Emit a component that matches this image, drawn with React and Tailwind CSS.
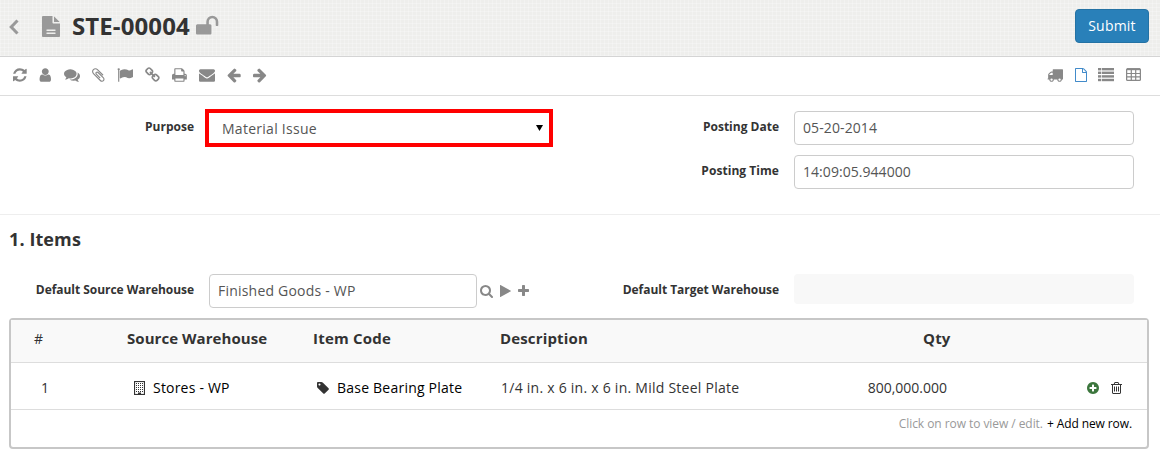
const PATHS = {
  file: [1536, "M1596 476q14 14 28 36h-472v-472q22 14 36 28zm-476 164h544v1056q0 40-28 68t-68 28h-1344q-40 0-68-28t-28-68v-1600q0-40 28-68t68-28h800v544q0 40 28 68t68 28zm160 864v-64q0-14-9-23t-23-9h-704q-14 0-23 9t-9 23v64q0 14 9 23t23 9h704q14 0 23-9t9-23zm0-256v-64q0-14-9-23t-23-9h-704q-14 0-23 9t-9 23v64q0 14 9 23t23 9h704q14 0 23-9t9-23z"],
  unlock: [1664, "M1728 576v256q0 26-19 45t-45 19h-64q-26 0-45-19t-19-45v-256q0-106-75-181t-181-75-181 75-75 181v192h96q40 0 68 28t28 68v576q0 40-28 68t-68 28h-960q-40 0-68-28t-28-68v-576q0-40 28-68t68-28h672v-192q0-185 131.500-316.500t316.500-131.500 316.500 131.500 131.500 316.500z"],
  refresh: [1536, "M1639 1056q0 5-1 7-64 268-268 434.500t-478 166.500q-146 0-282.500-55t-243.500-157l-129 129q-19 19-45 19t-45-19-19-45v-448q0-26 19-45t45-19h448q26 0 45 19t19 45-19 45l-137 137q71 66 161 102t187 36q134 0 250-65t186-179q11-17 53-117 8-23 30-23h192q13 0 22.500 9.500t9.500 22.500zm25-800v448q0 26-19 45t-45 19h-448q-26 0-45-19t-19-45 19-45l138-138q-148-137-349-137-134 0-250 65t-186 179q-11 17-53 117-8 23-30 23h-199q-13 0-22.500-9.500t-9.500-22.500v-7q65-268 270-434.500t480-166.500q146 0 284 55.500t245 156.500l130-129q19-19 45-19t45 19 19 45z"],
  user: [1408, "M1536 1399q0 109-62.500 187t-150.500 78h-854q-88 0-150.500-78t-62.500-187q0-85 8.500-160.500t31.500-152 58.500-131 94-89 134.500-34.500q131 128 313 128t313-128q76 0 134.500 34.500t94 89 58.500 131 31.500 152 8.500 160.500zm-256-887q0 159-112.500 271.500t-271.500 112.500-271.500-112.500-112.500-271.500 112.500-271.500 271.500-112.500 271.500 112.500 112.500 271.500z"],
  comments: [1792, "M1408 768q0 139-94 257t-256.500 186.500-353.500 68.500q-86 0-176-16-124 88-278 128-36 9-86 16h-3q-11 0-20.500-8t-11.500-21q-1-3-1-6.500t.5-6.500 2-6l2.500-5 3.500-5.500 4-5 4.500-5 4-4.500q5-6 23-25t26-29.500 22.500-29 25-38.500 20.500-44q-124-72-195-177t-71-224q0-139 94-257t256.500-186.500 353.500-68.500 353.500 68.500 256.500 186.500 94 257zm384 256q0 120-71 224.500t-195 176.500q10 24 20.500 44t25 38.500 22.500 29 26 29.500 23 25q1 1 4 4.500t4.500 5 4 5 3.500 5.500l2.500 5 2 6 .5 6.500-1 6.500q-3 14-13 22t-22 7q-50-7-86-16-154-40-278-128-90 16-176 16-271 0-472-132 58 4 88 4 161 0 309-45t264-129q125-92 192-212t67-254q0-77-23-152 129 71 204 178t75 230z"],
  clip: [1408, "M1596 1385q0 117-79 196t-196 79q-135 0-235-100l-777-776q-113-115-113-271 0-159 110-270t269-111q158 0 273 113l605 606q10 10 10 22 0 16-30.500 46.500t-46.500 30.500q-13 0-23-10l-606-607q-79-77-181-77-106 0-179 75t-73 181q0 105 76 181l776 777q63 63 145 63 64 0 106-42t42-106q0-82-63-145l-581-581q-26-24-60-24-29 0-48 19t-19 48q0 32 25 59l410 410q10 10 10 22 0 16-31 47t-47 31q-12 0-22-10l-410-410q-63-61-63-149 0-82 57-139t139-57q88 0 149 63l581 581q100 98 100 235z"],
  flag: [1792, "M320 256q0 72-64 110v1266q0 13-9.500 22.500t-22.500 9.500h-64q-13 0-22.500-9.500t-9.500-22.500v-1266q-64-38-64-110 0-53 37.500-90.500t90.500-37.500 90.500 37.500 37.500 90.500zm1472 64v763q0 25-12.500 38.500t-39.500 27.500q-215 116-369 116-61 0-123.500-22t-108.500-48-115.500-48-142.500-22q-192 0-464 146-17 9-33 9-26 0-45-19t-19-45v-742q0-32 31-55 21-14 79-43 236-120 421-120 107 0 200 29t219 88q38 19 88 19 54 0 117.500-21t110-47 88-47 54.500-21q26 0 45 19t19 45z"],
  link: [1664, "M1520 1216q0-40-28-68l-208-208q-28-28-68-28-42 0-72 32 3 3 19 18.500t21.500 21.500 15 19 13 25.500 3.500 27.500q0 40-28 68t-68 28q-15 0-27.500-3.500t-25.500-13-19-15-21.500-21.500-18.500-19q-33 31-33 73 0 40 28 68l206 207q27 27 68 27 40 0 68-26l147-146q28-28 28-67zm-703-705q0-40-28-68l-206-207q-28-28-68-28-39 0-68 27l-147 146q-28 28-28 67 0 40 28 68l208 208q27 27 68 27 42 0 72-31-3-3-19-18.500t-21.500-21.500-15-19-13-25.500-3.500-27.500q0-40 28-68t68-28q15 0 27.500 3.500t25.500 13 19 15 21.500 21.500 18.500 19q33-31 33-73zm895 705q0 120-85 203l-147 146q-83 83-203 83-121 0-204-85l-206-207q-83-83-83-203 0-123 88-209l-88-88q-86 88-208 88-120 0-204-84l-208-208q-84-84-84-204t85-203l147-146q83-83 203-83 121 0 204 85l206 207q83 83 83 203 0 123-88 209l88 88q86-88 208-88 120 0 204 84l208 208q84 84 84 204z"],
  print: [1664, "M448 1536h896v-256h-896v256zm0-640h896v-384h-160q-40 0-68-28t-28-68v-160h-640v640zm1152 64q0-26-19-45t-45-19-45 19-19 45 19 45 45 19 45-19 19-45zm128 0v416q0 13-9.500 22.500t-22.500 9.500h-224v160q0 40-28 68t-68 28h-960q-40 0-68-28t-28-68v-160h-224q-13 0-22.500-9.500t-9.500-22.500v-416q0-79 56.500-135.500t135.500-56.500h64v-544q0-40 28-68t68-28h672q40 0 88 20t76 48l152 152q28 28 48 76t20 88v256h64q79 0 135.500 56.500t56.500 135.500z"],
  envelope: [1792, "M1792 710v794q0 66-47 113t-113 47h-1472q-66 0-113-47t-47-113v-794q44 49 101 87 362 246 497 345 57 42 92.500 65.500t94.500 48 110 24.500h2q51 0 110-24.500t94.500-48 92.500-65.500q170-123 498-345 57-39 100-87zm0-294q0 79-49 151t-122 123q-376 261-468 325-10 7-42.500 30.500t-54 38-52 32.500-57.500 27-50 9h-2q-23 0-50-9t-57.500-27-52-32.500-54-38-42.500-30.500q-91-64-262-182.500t-205-142.500q-62-42-117-115.500t-55-136.500q0-78 41.500-130t118.500-52h1472q65 0 112.500 47t47.500 113z"],
  left: [1536, "M1664 896v128q0 53-32.500 90.500t-84.500 37.500h-704l293 294q38 36 38 90t-38 90l-75 76q-37 37-90 37-52 0-91-37l-651-652q-37-37-37-90 0-52 37-91l651-650q38-38 91-38 52 0 90 38l75 74q38 38 38 91t-38 91l-293 293h704q52 0 84.500 37.500t32.500 90.500z"],
  truck: [1792, "M640 1408q0-52-38-90t-90-38-90 38-38 90 38 90 90 38 90-38 38-90zm-384-512h384v-256h-158q-13 0-22 9l-195 195q-9 9-9 22v30zm1280 512q0-52-38-90t-90-38-90 38-38 90 38 90 90 38 90-38 38-90zm256-1088v1024q0 15-4 26.500t-13.500 18.500-16.500 11.500-23.500 6-22.500 2-25.500 0-22.500-.5q0 106-75 181t-181 75-181-75-75-181h-384q0 106-75 181t-181 75-181-75-75-181h-64q-3 0-22.500.5t-25.500 0-22.500-2-23.500-6-16.500-11.500-13.500-18.500-4-26.500q0-26 19-45t45-19v-320q0-8-.5-35t0-38 2.500-34.500 6.500-37 14-30.500 22.500-30l198-198q19-19 50.500-32t58.500-13h160v-192q0-26 19-45t45-19h1024q26 0 45 19t19 45z"],
  page: [1536, "M1596 380q28 28 48 76t20 88v1152q0 40-28 68t-68 28h-1344q-40 0-68-28t-28-68v-1600q0-40 28-68t68-28h896q40 0 88 20t76 48zm-444-244v376h376q-10-29-22-41l-313-313q-12-12-41-22zm384 1528v-1024h-416q-40 0-68-28t-28-68v-416h-768v1536h1280z"],
  search: [1664, "M1216 832q0-185-131.500-316.500t-316.500-131.500-316.500 131.500-131.500 316.500 131.500 316.500 316.500 131.500 316.500-131.500 131.500-316.500zm512 832q0 52-38 90t-90 38q-54 0-90-38l-343-342q-179 124-399 124-143 0-273.500-55.500t-225-150-150-225-55.500-273.500 55.500-273.500 150-225 225-150 273.500-55.500 273.500 55.500 225 150 150 225 55.500 273.500q0 220-124 399l343 343q37 37 37 90z"],
  play: [1408, "M1576 927l-1328 738q-23 13-39.500 3t-16.500-36v-1472q0-26 16.500-36t39.500 3l1328 738q23 13 23 31t-23 31z"],
  plus: [1408, "M1600 736v192q0 40-28 68t-68 28h-416v416q0 40-28 68t-68 28h-192q-40 0-68-28t-28-68v-416h-416q-40 0-68-28t-28-68v-192q0-40 28-68t68-28h416v-416q0-40 28-68t68-28h192q40 0 68 28t28 68v416h416q40 0 68 28t28 68z"],
  tag: [1536, "M576 448q0-53-37.500-90.500t-90.500-37.500-90.500 37.500-37.500 90.500 37.500 90.500 90.500 37.500 90.500-37.500 37.500-90.500zm1067 576q0 53-37 90l-491 492q-39 37-91 37-53 0-90-37l-715-716q-38-37-64.500-101t-26.500-117v-416q0-52 38-90t90-38h416q53 0 117 26.500t102 64.500l715 714q37 39 37 91z"],
  plusCircle: [1536, "M1344 960v-128q0-26-19-45t-45-19h-256v-256q0-26-19-45t-45-19h-128q-26 0-45 19t-19 45v256h-256q-26 0-45 19t-19 45v128q0 26 19 45t45 19h256v256q0 26 19 45t45 19h128q26 0 45-19t19-45v-256h256q26 0 45-19t19-45zm320-64q0 209-103 385.500t-279.500 279.500-385.500 103-385.500-103-279.500-279.500-103-385.500 103-385.500 279.500-279.500 385.500-103 385.500 103 279.500 279.500 103 385.500z"],
  trash: [1408, "M704 736v576q0 14-9 23t-23 9h-64q-14 0-23-9t-9-23v-576q0-14 9-23t23-9h64q14 0 23 9t9 23zm256 0v576q0 14-9 23t-23 9h-64q-14 0-23-9t-9-23v-576q0-14 9-23t23-9h64q14 0 23 9t9 23zm256 0v576q0 14-9 23t-23 9h-64q-14 0-23-9t-9-23v-576q0-14 9-23t23-9h64q14 0 23 9t9 23zm128 724v-948h-896v948q0 22 7 40.500t14.500 27 10.500 8.500h832q3 0 10.500-8.500t14.500-27 7-40.500zm-672-1076h448l-48-117q-7-9-17-11h-317q-10 2-17 11zm928 32v64q0 14-9 23t-23 9h-96v948q0 83-47 143.500t-113 60.500h-832q-66 0-113-58.500t-47-141.500v-952h-96q-14 0-23-9t-9-23v-64q0-14 9-23t23-9h309l70-167q15-37 54-63t79-26h320q40 0 79 26t54 63l70 167h309q14 0 23 9t9 23z"],
};

// Glyphs are centred on a 1792-unit square; the box is trimmed to the glyph's advance width.
function Icon({ name, size = 16, className = "" }) {
  const [w, d] = PATHS[name];
  return (
    <svg
      className={`shrink-0 overflow-visible ${className}`}
      width={(size * w) / 1792}
      height={size}
      viewBox={`${(1792 - w) / 2} 0 ${w} 1792`}
      fill="currentColor"
    >
      <path d={d} />
    </svg>
  );
}

function ListIcon() {
  return (
    <svg className="h-4 w-4" viewBox="0 0 16 16" fill="currentColor">
      {[1, 4.6, 8.2, 11.8].map((y) => (
        <g key={y}>
          <rect x="0" y={y} width="3" height="2.400" />
          <rect x="3.700" y={y} width="12.300" height="2.400" />
        </g>
      ))}
    </svg>
  );
}

function TableIcon() {
  return (
    <svg className="h-4 w-[15px]" viewBox="0 0 15 16" fill="none" stroke="currentColor">
      <rect x="0.600" y="2" width="13.800" height="11.400" rx="1" strokeWidth="1.300" />
      <path d="M1 2.200h13" strokeWidth="2" />
      <path d="M1 6.500h13M1 9.800h13M5.300 2v11.500M9.700 2v11.500" strokeWidth="1.200" />
    </svg>
  );
}

function BuildingIcon() {
  return (
    <svg className="block h-[14px] w-[11px] shrink-0" viewBox="0 0 11 14" fill="none" stroke="currentColor">
      <rect x="0.500" y="0.500" width="10" height="13" strokeWidth="1.200" />
      <path d="M2 2.500h7M2 4.500h7M2 6.500h7M2 8.500h7M2 10.500h7" strokeDasharray="1 1" />
      <path d="M4 12.500h3" strokeWidth="2" />
    </svg>
  );
}

function Label({ children, className }) {
  return <div className={`shrink-0 text-right text-xs font-bold text-[#333] ${className}`}>{children}</div>;
}

const INPUT =
  "flex h-[34px] items-center rounded border border-[#ccc] bg-white px-2 text-sm text-[#555]";

export default function App() {
  return (
    <div className="h-[459px] w-[1160px] overflow-hidden bg-white font-['Open_Sans',sans-serif] text-sm text-[#333]">
      <header className="flex h-[57px] items-center border-b border-[#d4d4d4] bg-[#eeeeec] bg-[repeating-linear-gradient(90deg,rgba(255,255,255,0.25)_0_1px,transparent_1px_4px),repeating-linear-gradient(0deg,rgba(255,255,255,0.25)_0_1px,transparent_1px_4px)] pr-[11px] pl-[9px] text-[#999]">
        <svg className="mt-[-3px] h-4 w-[10px]" viewBox="0 0 10 16" fill="none" stroke="currentColor" strokeWidth="3">
          <path d="M8.500 1.500L2.200 8L8.500 14.500" />
        </svg>
        <Icon name="file" size={21} className="mt-[-4px] ml-[23px]" />
        <h1 className="mt-[-4px] ml-[12px] text-2xl font-bold tracking-[0.1px] text-[#333]">STE-00004</h1>
        <Icon name="unlock" size={24} className="mt-[-5px] ml-[6px]" />
        <button className="mt-[-5px] ml-auto h-[34px] w-[74px] rounded border border-[#2472a4] bg-[#2980b9] text-sm tracking-[0.2px] text-white">
          Submit
        </button>
      </header>

      <nav className="flex h-[39px] items-center justify-between border-b border-[#ddd] pr-[19px] pb-[2px] pl-[13px] text-[#888]">
        <div className="flex items-center gap-[12.200px]">
          <Icon name="refresh" />
          <Icon name="user" />
          <Icon name="comments" />
          <Icon name="clip" />
          <Icon name="flag" />
          <Icon name="link" />
          <Icon name="print" />
          <Icon name="envelope" />
          <Icon name="left" />
          <Icon name="left" className="-scale-x-100" />
        </div>
        <div className="flex items-center">
          <Icon name="truck" />
          <Icon name="page" size={14} className="ml-3 text-[#428bca]" />
          <div className="ml-[11px] flex items-center gap-3">
            <ListIcon />
            <TableIcon />
          </div>
        </div>
      </nav>

      <section className="flex h-[119px] border-b border-[#eee] pt-[13px]">
        <div className="flex w-[580px] items-start">
          <Label className="mt-[10px] w-[194px]">Purpose</Label>
          <div className="ml-[11px] flex h-[38px] w-[348px] items-center justify-between border-4 border-[#f00] pr-[6px] pl-[13px] text-[#555]">
            <span className="pt-px tracking-[0.27px]">Material Issue</span>
            <svg className="mt-[-1px] h-[6px] w-[7px]" viewBox="0 0 7 6" fill="#000">
              <path d="M0 0h7L3.500 6z" />
            </svg>
          </div>
        </div>
        <div className="mt-[2px] flex flex-col gap-[10px]">
          <div className="flex">
            <Label className="mt-[8px] w-[199px]">Posting Date</Label>
            <div className={`${INPUT} ml-[15px] w-[340px] tracking-[0.1px]`}>05-20-2014</div>
          </div>
          <div className="flex">
            <Label className="mt-[8px] w-[199px] tracking-[0.05px]">Posting Time</Label>
            <div className={`${INPUT} ml-[15px] w-[340px] tracking-[0.05px]`}>14:09:05.944000</div>
          </div>
        </div>
      </section>

      <section className="pt-[11px]">
        <h2 className="pl-[9px] text-lg leading-[26px] font-bold tracking-[0.1px]">1. Items</h2>
        <div className="mt-[22px] flex h-[34px]">
          <Label className="mt-[8px] w-[194px] tracking-[-0.04px]">Default Source Warehouse</Label>
          <div className={`${INPUT} ml-[15px] w-[268px] tracking-[0.21px]`}>Finished Goods - WP</div>
          <div className="ml-[3px] flex w-[103px] items-center gap-[7px] text-[#888]">
            <Icon name="search" size={14} />
            <Icon name="play" size={14} />
            <Icon name="plus" size={14} />
          </div>
          <Label className="mt-[8px] w-[196px] tracking-[-0.04px]">Default Target Warehouse</Label>
          <div className="ml-[15px] h-[30px] w-[340px] rounded bg-[#f8f8f8]" />
        </div>

        <div className="mt-[10px] ml-[9px] h-[131px] w-[1140px] rounded border-2 border-[#c7c7c7]">
          <div className="grid h-[43px] grid-cols-[116px_186px_187px_347px_300px] border-b border-[#ddd] bg-[#f9f9f9] pt-2 text-[15px] leading-5 font-bold tracking-[0.05px]">
            <div className="pt-px pl-[23px] text-sm font-normal">#</div>
            <div>Source Warehouse</div>
            <div className="tracking-[0.2px]">Item Code</div>
            <div className="tracking-[0.15px]">Description</div>
            <div className="pl-[76px] tracking-[0.2px]">Qty</div>
          </div>
          <div className="grid h-[47px] grid-cols-[116px_186px_187px_347px_300px] items-center border-b border-[#ddd] pt-1">
            <div className="pl-[30px]">1</div>
            <div className="flex items-center gap-[8px] pl-[7px] tracking-[0.2px] text-black">
              <span className="text-[#333]"><BuildingIcon /></span>
              Stores - WP
            </div>
            <div className="flex items-center gap-[8px] pl-[4px] tracking-[0.22px] text-black">
              <Icon name="tag" size={14} className="text-[#333]" />
              Base Bearing Plate
            </div>
            <div className="pl-px tracking-[0.25px]">1/4 in. x 6 in. x 6 in. Mild Steel Plate</div>
            <div className="flex items-center">
              <span className="w-[100px] text-right">800,000.000</span>
              <Icon name="plusCircle" size={14} className="ml-[140px] text-[#3c763d]" />
              <Icon name="trash" size={14} className="ml-3 text-[#333]" />
            </div>
          </div>
          <div className="flex justify-end gap-1 pt-[6px] pr-[15px] text-xs leading-4">
            <span className="tracking-[-0.06px] text-[#999]">Click on row to view / edit.</span>
            <span className="tracking-[-0.1px] text-black">+ Add new row.</span>
          </div>
        </div>
      </section>
    </div>
  );
}
